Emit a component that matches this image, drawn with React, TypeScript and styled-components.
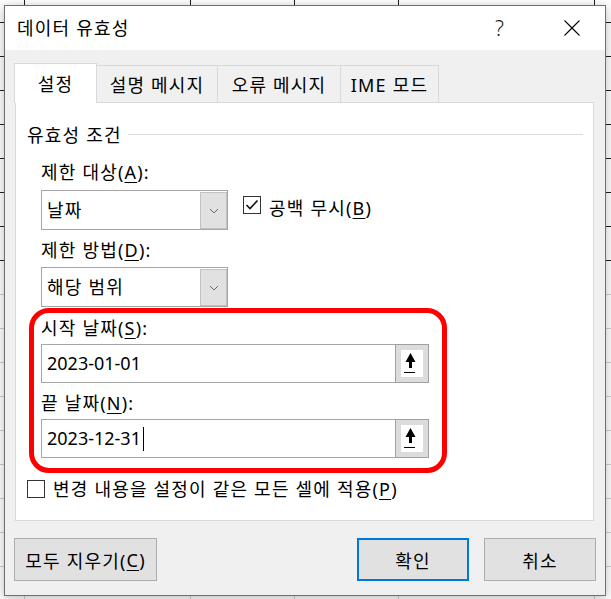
import React from 'react';
import styled, {createGlobalStyle} from 'styled-components';

const GlobalStyle = createGlobalStyle`
  html,
  body {
    margin: 0;
    padding: 0;
    background: #fff;
  }

  body {
    font-family: 'Noto Sans', 'Noto Sans CJK KR', sans-serif;
    font-size: 18px;
    letter-spacing: 1.2px;
    color: #000;
  }
`;

// spreadsheet behind the dialog
const columnLines = (color: string) =>
  `linear-gradient(to right, transparent 24px, ${color} 24px 25px, transparent 25px 190px, ${color} 190px 191px, transparent 191px 294px, ${color} 294px 295px, transparent 295px 398px, ${color} 398px 399px, transparent 399px 594px, ${color} 594px 595px, transparent 595px)`;

const Sheet = styled.div`
  position: relative;
  display: flex;
  flex-direction: column;
  width: 611px;
  height: 599px;
  overflow: hidden;
  background: #fff;
`;

const Band = styled.div<{$color: string; $offset: number; $height?: number}>`
  flex: ${(p) => (p.$height ? `0 0 ${p.$height}px` : '1')};
  background-image: ${(p) => columnLines(p.$color)},
    repeating-linear-gradient(
      to bottom,
      transparent 0 ${(p) => p.$offset}px,
      ${(p) => p.$color} ${(p) => p.$offset}px ${(p) => p.$offset + 1}px,
      transparent ${(p) => p.$offset + 1}px 34px
    );
`;

const Dialog = styled.div`
  position: absolute;
  left: 4px;
  top: 5px;
  width: 602px;
  height: 591px;
  box-sizing: border-box;
  display: flex;
  flex-direction: column;
  border: 1px solid #6f6f6f;
  background: #f0f0f0;
  box-shadow: 0 2px 10px rgba(0, 0, 0, 0.28);
`;

const TitleBar = styled.div`
  display: flex;
  align-items: center;
  height: 44px;
  padding: 0 5px 0 12px;
  background: #fff;
`;

const Title = styled.div`
  flex: 1;
  line-height: 24px;
`;

const CaptionButton = styled.div`
  display: flex;
  align-items: center;
  justify-content: center;
  width: 56px;
  height: 44px;
  font-size: 21px;
  font-weight: 300;
  color: #222;

  & + & {
    margin-left: 16px;
  }
`;

const Body = styled.div`
  flex: 1;
  display: flex;
  flex-direction: column;
  padding: 13px 11px 0 10px;
`;

const TabRow = styled.div`
  position: relative;
  z-index: 1;
  display: flex;
  align-items: flex-end;
  height: 40px;
  margin: 0 0 -1px -1px;
`;

const Tab = styled.div<{$active?: boolean; $width: number}>`
  display: flex;
  align-items: center;
  justify-content: center;
  box-sizing: border-box;
  width: ${(p) => p.$width}px;
  height: ${(p) => (p.$active ? 40 : 38)}px;
  padding-bottom: ${(p) => (p.$active ? 2 : 0)}px;
  border: 1px solid #d9d9d9;
  border-bottom: ${(p) => (p.$active ? 'none' : '1px solid #d9d9d9')};
  background: ${(p) => (p.$active ? '#fff' : '#f0f0f0')};
  white-space: nowrap;

  & + & {
    margin-left: -1px;
  }
`;

const Panel = styled.div`
  flex: 0 0 419px;
  box-sizing: border-box;
  display: flex;
  flex-direction: column;
  padding: 20px 10px 0 11px;
  border: 1px solid #d9d9d9;
  background: #fff;
`;

const GroupHeader = styled.div`
  display: flex;
  align-items: center;
  gap: 6px;
  line-height: 24px;
`;

const GroupLine = styled.div`
  flex: 1;
  height: 1px;
  margin-top: -2px;
  background: #dcdcdc;
`;

const Fields = styled.div`
  display: flex;
  flex-direction: column;
  margin-left: 14px;
`;

const FieldLabel = styled.div<{$gap: number}>`
  margin-top: ${(p) => p.$gap}px;
  line-height: 24px;
  white-space: nowrap;

  & u {
    text-decoration-thickness: 1px;
    text-underline-offset: 3px;
  }
`;

const ComboRow = styled.div<{$gap: number}>`
  display: flex;
  align-items: flex-start;
  margin-top: ${(p) => p.$gap}px;
`;

const Combo = styled.div`
  display: flex;
  box-sizing: border-box;
  width: 187px;
  height: 40px;
  border: 1px solid #a6a6a6;
  background: #fff;
`;

const ComboText = styled.div`
  flex: 1;
  padding-left: 5px;
  line-height: 38px;
`;

const ComboArrow = styled.div`
  display: flex;
  align-items: center;
  justify-content: center;
  box-sizing: border-box;
  width: 27px;
  margin: 1px 0 0;
  border: 1px solid #c2c2c2;
  background: #e1e1e1;
`;

const CheckRow = styled.label<{$gap: number; $boxTop: number; $indent?: number}>`
  display: flex;
  align-items: flex-start;
  gap: 8px;
  margin-top: ${(p) => p.$gap}px;
  margin-left: ${(p) => p.$indent ?? 0}px;
  line-height: 24px;
  white-space: nowrap;

  & > span:first-child {
    margin-top: ${(p) => p.$boxTop}px;
  }

  & u {
    text-decoration-thickness: 1px;
    text-underline-offset: 3px;
  }
`;

const CheckBox = styled.span`
  display: flex;
  align-items: center;
  justify-content: center;
  box-sizing: border-box;
  flex: 0 0 18px;
  height: 18px;
  border: 1px solid #333;
  background: #fff;
`;

const Highlight = styled.div`
  box-sizing: border-box;
  width: 418px;
  margin: 1px 0 0 -12px;
  padding: 3px 0 10px 7px;
  border: 5px solid #ff0000;
  border-radius: 20px;
`;

const RefEdit = styled.div<{$gap: number}>`
  display: flex;
  box-sizing: border-box;
  width: 388px;
  height: 39px;
  margin-top: ${(p) => p.$gap}px;
  border: 1px solid #a6a6a6;
  background: #fff;
`;

const RefText = styled.div`
  flex: 1;
  display: flex;
  align-items: center;
  padding-left: 5px;
  line-height: 37px;
  letter-spacing: 0;
`;

const Caret = styled.span`
  width: 1px;
  height: 24px;
  margin-left: 2px;
  background: #000;
`;

const RefButton = styled.div`
  display: flex;
  align-items: center;
  justify-content: center;
  box-sizing: border-box;
  width: 34px;
  height: 39px;
  margin: -1px -1px -1px 0;
  border: 1px solid #a0a0a0;
  background: #dcdcdc;
`;

const RefIcon = styled.span`
  display: flex;
  width: 22px;
  height: 27px;
  margin-top: -1px;
  background: #fff;
`;

const ButtonRow = styled.div`
  display: flex;
  gap: 15px;
  margin: 17px -2px 0 -1px;
`;

const Spacer = styled.div`
  flex: 1;
`;

const Button = styled.div<{$width: number; $default?: boolean}>`
  display: flex;
  align-items: center;
  justify-content: center;
  box-sizing: border-box;
  width: ${(p) => p.$width}px;
  height: 43px;
  border: ${(p) => (p.$default ? '2px solid #0078d7' : '1px solid #adadad')};
  background: #e1e1e1;
  white-space: nowrap;

  & u {
    text-decoration-thickness: 1px;
    text-underline-offset: 3px;
  }
`;

const CloseIcon = () => (
  <svg width="16" height="16" viewBox="0 0 16 16">
    <path d="M0.5 0.5 L15.5 15.5 M15.5 0.5 L0.5 15.5" stroke="#000" strokeWidth="1.1" fill="none" />
  </svg>
);

const Chevron = () => (
  <svg width="10" height="6" viewBox="0 0 10 6">
    <path d="M1 1 L5 5 L9 1" stroke="#6a6a6a" strokeWidth="1" fill="none" />
  </svg>
);

const Check = () => (
  <svg width="14" height="12" viewBox="0 0 14 12">
    <path d="M1.5 6 L5 9.5 L12.5 1.5" stroke="#111" strokeWidth="1.6" fill="none" />
  </svg>
);

const CollapseArrow = () => (
  <svg width="22" height="27" viewBox="0 0 22 27">
    <path d="M9.5 3 L4.5 12 L8 12 L8 18 L11 18 L11 12 L14.5 12 Z" fill="#000" />
    <rect x="3" y="22" width="11" height="1" fill="#000" />
  </svg>
);

const tabs = [
  {label: '설정', width: 83, active: true},
  {label: '설명 메시지', width: 122},
  {label: '오류 메시지', width: 124},
  {label: 'IME 모드', width: 99},
];

const App = () => (
  <>
    <GlobalStyle />
    <Sheet>
      <Band $color="#1f1f1f" $offset={22} $height={261} />
      <Band $color="#d0d0d0" $offset={33} />

      <Dialog>
        <TitleBar>
          <Title>데이터 유효성</Title>
          <CaptionButton>?</CaptionButton>
          <CaptionButton>
            <CloseIcon />
          </CaptionButton>
        </TitleBar>

        <Body>
          <TabRow>
            {tabs.map((t) => (
              <Tab key={t.label} $active={t.active} $width={t.width}>
                {t.label}
              </Tab>
            ))}
          </TabRow>

          <Panel>
            <GroupHeader>
              유효성 조건
              <GroupLine />
            </GroupHeader>

            <Fields>
              <FieldLabel $gap={13}>
                제한 대상(<u>A</u>):
              </FieldLabel>
              <ComboRow $gap={6}>
                <Combo>
                  <ComboText>날짜</ComboText>
                  <ComboArrow>
                    <Chevron />
                  </ComboArrow>
                </Combo>
                <CheckRow $gap={6} $boxTop={0} $indent={15}>
                  <CheckBox>
                    <Check />
                  </CheckBox>
                  <span>
                    공백 무시(<u>B</u>)
                  </span>
                </CheckRow>
              </ComboRow>

              <FieldLabel $gap={8}>
                제한 방법(<u>D</u>):
              </FieldLabel>
              <ComboRow $gap={5}>
                <Combo>
                  <ComboText>해당 범위</ComboText>
                  <ComboArrow>
                    <Chevron />
                  </ComboArrow>
                </Combo>
              </ComboRow>

              <Highlight>
                <FieldLabel $gap={0}>
                  시작 날짜(<u>S</u>):
                </FieldLabel>
                <RefEdit $gap={4}>
                  <RefText>2023-01-01</RefText>
                  <RefButton>
                    <RefIcon>
                      <CollapseArrow />
                    </RefIcon>
                  </RefButton>
                </RefEdit>

                <FieldLabel $gap={8}>
                  끝 날짜(<u>N</u>):
                </FieldLabel>
                <RefEdit $gap={4}>
                  <RefText>
                    2023-12-31
                    <Caret />
                  </RefText>
                  <RefButton>
                    <RefIcon>
                      <CollapseArrow />
                    </RefIcon>
                  </RefButton>
                </RefEdit>
              </Highlight>
            </Fields>

            <CheckRow $gap={4} $boxTop={3}>
              <CheckBox />
              <span>
                변경 내용을 설정이 같은 모든 셀에 적용(<u>P</u>)
              </span>
            </CheckRow>
          </Panel>

          <ButtonRow>
            <Button $width={143}>
              모두 지우기(<u>C</u>)
            </Button>
            <Spacer />
            <Button $width={112} $default>
              확인
            </Button>
            <Button $width={112}>취소</Button>
          </ButtonRow>
        </Body>
      </Dialog>
    </Sheet>
  </>
);

export default App;
